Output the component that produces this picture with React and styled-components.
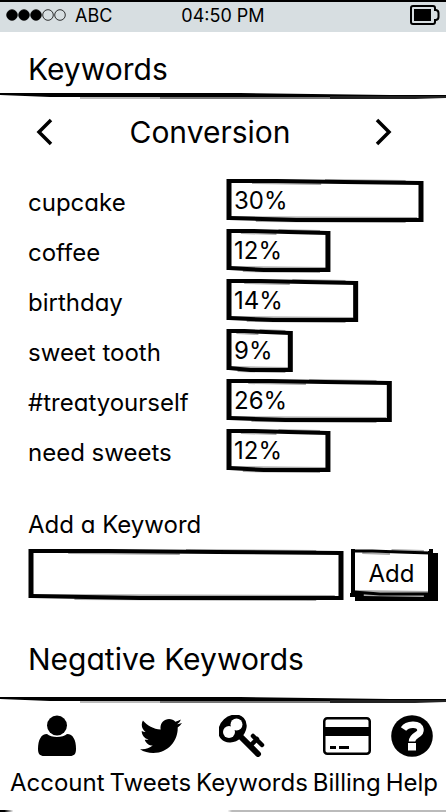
import React from "react";
import styled, { createGlobalStyle } from "styled-components";
import { FaTwitter } from "react-icons/fa";

const GlobalStyle = createGlobalStyle`
  *, *::before, *::after { box-sizing: border-box; }
  body {
    margin: 0;
    background: #fff;
    color: #000;
    font-family: Inter, "Open Sans", sans-serif;
    font-feature-settings: "cv11";
  }
`;

const Screen = styled.div`
  display: flex;
  flex-direction: column;
  min-height: 100vh;
`;

const StatusBar = styled.header`
  display: grid;
  grid-template-columns: 1fr auto 1fr;
  align-items: center;
  height: 32px;
  padding: 0 6px 4px;
  border-top: 2px solid #000;
  background: #d7dee1;
  font-size: 18px;
`;

const Carrier = styled.div`
  display: flex;
  align-items: center;
  gap: 9px;
`;

const Battery = styled.svg`
  justify-self: end;
  display: block;
`;

const Heading = styled.h1`
  margin: 0;
  padding: 0 28px;
  font-size: 30px;
  line-height: 36px;
  font-weight: 400;
`;

const TitleBlock = styled.div`
  padding: 19px 0 6px;
`;

const RuleSvg = styled.svg`
  display: block;
  width: 100%;
  height: 6px;
`;

const Switcher = styled.div`
  display: flex;
  align-items: center;
  justify-content: space-between;
  height: 80px;
  padding: 0 52px 14px 34px;
`;

const Metric = styled.h2`
  flex: 1;
  margin: 0;
  padding-right: 8px;
  font-size: 30px;
  line-height: 36px;
  font-weight: 400;
  text-align: center;
`;

const PlainButton = styled.button`
  display: grid;
  place-items: center;
  padding: 0;
  border: 0;
  background: none;
  color: inherit;
  cursor: pointer;
`;

const KeywordList = styled.ul`
  display: grid;
  gap: 6px;
  margin: 0;
  padding: 0 22px 0 28px;
  list-style: none;
  font-size: 24px;
  line-height: 30px;
`;

const KeywordRow = styled.li`
  display: grid;
  grid-template-columns: 1fr 1fr;
  align-items: center;
  height: 44px;
`;

const KeywordName = styled.span`
  padding-top: 4px;
`;

const Bar = styled.div`
  position: relative;
  display: flex;
  align-items: center;
  width: ${(p) => p.$width}%;
  height: 44px;
  padding-left: 8px;
`;

const FrameSvg = styled.svg`
  position: absolute;
  inset: 0 3px;
  width: calc(100% - 6px);
  height: 100%;
  overflow: visible;
  pointer-events: none;
`;

const AddForm = styled.form`
  display: grid;
  grid-template-columns: 1fr 88px;
  gap: 9px 6px;
  padding: 37px 8px 0 28px;
  font-size: 24px;
  line-height: 30px;
`;

const FieldLabel = styled.label`
  grid-column: 1 / -1;
`;

const Field = styled.div`
  position: relative;
  height: 52px;
`;

const TextInput = styled.input`
  width: 100%;
  height: 100%;
  padding: 0 12px;
  border: 0;
  outline: 0;
  background: none;
  font: inherit;
`;

const AddButton = styled.button`
  position: relative;
  height: 48px;
  margin-right: 5px;
  padding: 2px 0 0;
  border: 0;
  background: #fff;
  box-shadow: 5px 4px 0 #000, inset -4px -4px 0 #000;
  color: inherit;
  font: inherit;
  cursor: pointer;
`;

const Section = styled.section`
  padding: 40px 0 20px;
`;

const TabBar = styled.nav`
  display: flex;
  justify-content: space-between;
  padding: 12px 8px 12px 10px;
`;

const Tab = styled.a`
  display: flex;
  flex-direction: column;
  align-items: center;
  gap: 11px;
  color: inherit;
  font-size: 24px;
  line-height: 30px;
  text-decoration: none;
`;

const leanPadding = { left: "0 20px 0 0", right: "0 0 0 22px", none: "0" };

const TabIcon = styled.span`
  display: grid;
  place-items: center;
  height: 42px;
  padding: ${(p) => leanPadding[p.$lean || "none"]};
`;

const Spacer = styled.div`
  flex: 1;
`;

const BottomEdge = styled.div`
  height: 2px;
  background: linear-gradient(to right, #000 0, #000 1%, #fff 3%, #fff 51%, #bbb 52%, #bbb 100%);
`;

function Rule() {
  return (
    <RuleSvg viewBox="0 0 446 6" preserveAspectRatio="none" aria-hidden="true">
      <path d="M0 0 L240 0 L390 2 L446 2 L446 5 L330 5 L160 4 L50 4 L0 2 Z" />
      <path d="M80 4 H160 V6 H80 Z" fill="#bbb" />
      <path d="M160 4 H330 V6 H160 Z" fill="#777" />
      <path d="M330 3 H446 V5 L415 6 L330 6 Z" fill="#222" />
    </RuleSvg>
  );
}

function Frame({ height = 44, weight = 5 }) {
  const h = height;
  const line = { vectorEffect: "non-scaling-stroke", fill: "none", stroke: "#000" };
  return (
    <FrameSvg viewBox={`0 0 100 ${h}`} preserveAspectRatio="none" aria-hidden="true">
      <path {...line} stroke="#aaa" strokeWidth="2" d={`M50 1 L92 2 M12 4 L48 5 M0 ${h - 6} L98 ${h - 5} M14 ${h - 2} L92 ${h - 1}`} />
      <path {...line} strokeWidth={weight - 1} d={`M0 2 L25 2 L60 3 L100 4 M0 ${h - 5} L35 ${h - 3} L100 ${h - 3}`} />
      <path {...line} strokeWidth={weight} d={`M0 0 L0 ${h - 3} M100 2 L100 ${h - 1}`} />
    </FrameSvg>
  );
}

function AccountIcon() {
  return (
    <svg width="38" height="42" viewBox="0 0 38 42" aria-hidden="true">
      <circle cx="19" cy="10.5" r="10" />
      <path d="M9 19 C13 23 25 23 29 19 C35 19 38 25 38 34 C38 39 36 41 32 41 L6 41 C2 41 0 39 0 34 C0 25 3 19 9 19 Z" />
    </svg>
  );
}

function KeyIcon() {
  return (
    <svg width="46" height="42" viewBox="0 0 46 42" aria-hidden="true">
      <ellipse cx="13.5" cy="13.5" rx="15.5" ry="12.5" transform="rotate(-43 13.5 13.5)" />
      <circle cx="17.5" cy="9.5" r="6" fill="#fff" />
      <circle cx="10" cy="17" r="6" fill="#fff" />
      <path d="M20 20 L39 39" fill="none" stroke="#000" strokeWidth="6" strokeLinecap="round" />
      <path d="M31 31 L38 24 M34 21 L43 30" fill="none" stroke="#000" strokeWidth="4.5" strokeLinecap="round" />
    </svg>
  );
}

function CardIcon() {
  return (
    <svg width="48" height="38" viewBox="0 0 48 38" aria-hidden="true">
      <rect x="1.25" y="1.25" width="45.5" height="35.5" rx="3" fill="none" stroke="#000" strokeWidth="2.5" />
      <path d="M1 10 H47 V19 H1 Z M7 29 H13 V32 H7 Z M16 29 H26 V32 H16 Z" />
    </svg>
  );
}

function HelpIcon() {
  return (
    <svg width="42" height="42" viewBox="0 0 42 42" aria-hidden="true">
      <circle cx="21" cy="21" r="20.8" />
      <path d="M12.5 14 C16 9 28 7.5 29.5 14.5 C30.5 20.5 21 19.5 21 26.5" fill="none" stroke="#fff" strokeWidth="6.5" />
      <path d="M17 28 H25 V35.5 H17 Z" fill="#fff" />
    </svg>
  );
}

const keywords = [
  { name: "cupcake", value: 30, width: 100 },
  { name: "coffee", value: 12, width: 53 },
  { name: "birthday", value: 14, width: 67 },
  { name: "sweet tooth", value: 9, width: 34 },
  { name: "#treatyourself", value: 26, width: 84 },
  { name: "need sweets", value: 12, width: 53 },
];

const tabs = [
  { name: "Account", icon: <AccountIcon /> },
  { name: "Tweets", icon: <FaTwitter size={42} />, lean: "right" },
  { name: "Keywords", icon: <KeyIcon />, lean: "left" },
  { name: "Billing", icon: <CardIcon /> },
  { name: "Help", icon: <HelpIcon /> },
];

export default function App() {
  return (
    <Screen>
      <GlobalStyle />
      <StatusBar>
        <Carrier>
          <svg width="60" height="12" viewBox="0 0 60 12" role="img" aria-label="Signal strength">
            {[6, 18, 30, 42, 54].map((x, i) => (
              <circle key={x} cx={x} cy="6" r="5.3" fill={i < 3 ? "#000" : "none"} stroke="#000" strokeWidth="0.8" />
            ))}
          </svg>
          ABC
        </Carrier>
        <span>04:50 PM</span>
        <Battery width="30" height="20" viewBox="0 0 30 20" role="img" aria-label="Battery">
          <path d="M3 1 H23 Q25 1 25 3 V5 H26 Q28.5 5.5 28.5 8 V12 Q28.5 14.5 26 15 H25 V17 Q25 19 23 19 H3 Q1 19 1 17 V3 Q1 1 3 1 Z" fill="none" stroke="#000" strokeWidth="2" />
          <path d="M4 4 H21 V16 H4 Z" />
        </Battery>
      </StatusBar>
      <TitleBlock>
        <Heading>Keywords</Heading>
      </TitleBlock>
      <Rule />
      <Switcher>
        <PlainButton type="button" aria-label="Previous metric">
          <svg width="20" height="28" viewBox="0 0 20 28" fill="none" stroke="#000" strokeWidth="3.5">
            <path d="M17 2 L5 14 L17 26" />
          </svg>
        </PlainButton>
        <Metric>Conversion</Metric>
        <PlainButton type="button" aria-label="Next metric">
          <svg width="20" height="28" viewBox="0 0 20 28" fill="none" stroke="#000" strokeWidth="3.5">
            <path d="M3 2 L15 14 L3 26" />
          </svg>
        </PlainButton>
      </Switcher>
      <KeywordList>
        {keywords.map((k) => (
          <KeywordRow key={k.name}>
            <KeywordName>{k.name}</KeywordName>
            <Bar $width={k.width}>
              <Frame />
              {k.value}%
            </Bar>
          </KeywordRow>
        ))}
      </KeywordList>
      <AddForm onSubmit={(e) => e.preventDefault()}>
        <FieldLabel htmlFor="keyword">Add a Keyword</FieldLabel>
        <Field>
          <TextInput id="keyword" type="text" />
          <Frame height={52} />
        </Field>
        <AddButton type="submit">
          <Frame height={48} weight={4} />
          Add
        </AddButton>
      </AddForm>
      <Section>
        <Heading as="h2">Negative Keywords</Heading>
      </Section>
      <Spacer />
      <Rule />
      <TabBar>
        {tabs.map((t) => (
          <Tab key={t.name} href={`#${t.name.toLowerCase()}`}>
            <TabIcon $lean={t.lean}>{t.icon}</TabIcon>
            {t.name}
          </Tab>
        ))}
      </TabBar>
      <BottomEdge />
    </Screen>
  );
}
